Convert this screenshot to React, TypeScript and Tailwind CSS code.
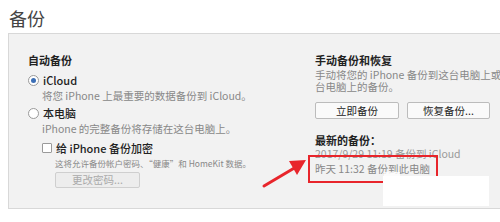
import React from 'react'

const font = { fontFamily: '"Noto Sans CJK SC", "Microsoft YaHei", sans-serif' }

function Radio({ checked }: { checked?: boolean }) {
  return (
    <span className="w-[11px] h-[11px] rounded-full border border-[#9a9a9a] bg-white flex items-center justify-center shrink-0">
      {checked && <span className="w-[5px] h-[5px] rounded-full bg-[#3c6fb6]" />}
    </span>
  )
}

export default function App() {
  return (
    <div className="relative w-[500px] h-[222px] bg-white overflow-hidden text-[#333]" style={font}>
      {/* Title */}
      <div className="pl-[9px] pt-[7px] h-[33px] text-[18px] leading-[22px] text-[#444]">备份</div>

      {/* Panel */}
      <div className="ml-[8px] w-[520px] h-[176px] border border-[#d8d8d8] bg-[#f2f2f2] flex">
        {/* Left column */}
        <div className="w-[287px] shrink-0 pl-[19px] pt-[18px] text-[10.5px]">
          <div className="font-bold text-[11px] leading-[16px] text-[#222]">自动备份</div>
          <div className="mt-[4px] flex items-center gap-[4px] leading-[16px]">
            <Radio checked />
            <span className="font-medium text-[11px] text-[#222]">iCloud</span>
          </div>
          <div className="pl-[14px] leading-[16px] text-[#888] whitespace-nowrap">将您 iPhone 上最重要的数据备份到 iCloud。</div>
          <div className="mt-[1px] flex items-center gap-[4px] leading-[16px]">
            <Radio />
            <span className="font-medium text-[11px] text-[#222]">本电脑</span>
          </div>
          <div className="leading-[15px] pl-[14px] text-[#888] whitespace-nowrap">iPhone 的完整备份将存储在这台电脑上。</div>
          <div className="mt-[4px] pl-[14px] flex items-center gap-[4px] leading-[16px]">
            <span className="w-[10px] h-[10px] border border-[#9a9a9a] bg-white rounded-[1px] shrink-0" />
            <span className="font-medium text-[11px] text-[#222]">给 iPhone 备份加密</span>
          </div>
          <div className="pl-[27px] leading-[14px] text-[8.5px] text-[#888] whitespace-nowrap">这将允许备份帐户密码、“健康”和 HomeKit 数据。</div>
          <div className="pl-[27px] mt-[2px]">
            <div className="w-[85px] h-[16px] border border-[#cfcfcf] bg-[#ededed] rounded-[2px] flex items-center justify-center text-[10.5px] text-[#aaa]">
              更改密码...
            </div>
          </div>
        </div>

        {/* Right column */}
        <div className="pl-[19px] pt-[18px] text-[10.5px]">
          <div className="font-bold text-[11px] leading-[16px] text-[#222]">手动备份和恢复</div>
          <div className="mt-[1px] leading-[12px] text-[#888]">
            <div className="whitespace-nowrap">手动将您的 iPhone 备份到这台电脑上或手动恢复存储在这</div>
            <div>台电脑上的备份。</div>
          </div>
          <div className="mt-[9px] flex gap-[8px]">
            <div className="w-[84px] h-[17px] border border-[#bcbcbc] bg-[#fafafa] rounded-[2px] flex items-center justify-center text-[10.5px] text-[#222]">
              立即备份
            </div>
            <div className="w-[83px] h-[17px] border border-[#bcbcbc] bg-[#fafafa] rounded-[2px] flex items-center justify-center text-[10.5px] text-[#222]">
              恢复备份...
            </div>
          </div>
          <div className="mt-[13px] font-bold text-[11px] leading-[16px] text-[#222]">最新的备份：</div>
          <div className="leading-[12px] text-[#999] whitespace-nowrap">2017/9/29 11:19 备份到 iCloud</div>
          <div className="mt-[2px] leading-[14px] text-[#888] whitespace-nowrap">昨天 11:32 备份到此电脑</div>
        </div>
      </div>

      {/* Annotation: red box */}
      <div className="absolute left-[308px] top-[155px] w-[130px] h-[28px] border-2 border-[#e8252b]" />

      {/* Annotation: white cover patch */}
      <div className="absolute left-[383px] top-[176px] w-[106px] h-[30px] bg-white" />
      <div className="absolute left-[384px] top-[172px] w-[16px] h-[6px] bg-white/80" />

      {/* Annotation: red arrow */}
      <svg className="absolute left-[258px] top-[155px]" width="52" height="36" viewBox="0 0 52 36">
        <line x1="6" y1="31" x2="38" y2="12" stroke="#e8252b" strokeWidth="3" strokeLinecap="round" />
        <polygon points="48,5 31,6 39,20" fill="#e8252b" />
      </svg>
    </div>
  )
}
